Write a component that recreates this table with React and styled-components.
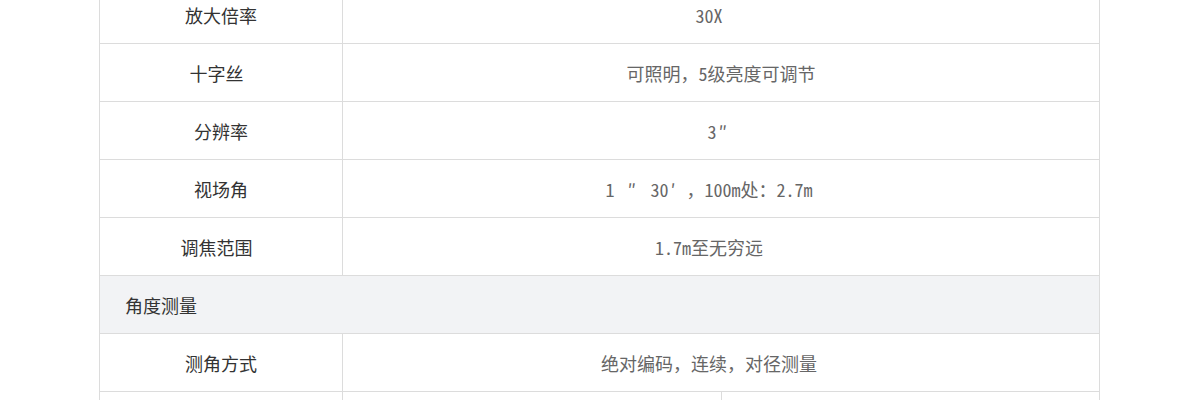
import React from 'react'
import styled, { createGlobalStyle } from 'styled-components'

const GlobalStyle = createGlobalStyle`
  html, body {
    margin: 0;
    padding: 0;
    background: #fff;
  }
  body {
    font-family: "Noto Sans Mono CJK SC", "Noto Sans CJK SC", sans-serif;
  }
`

const SpecTable = styled.div`
  width: 1001px;
  margin: -15px 0 0 99px;
  box-sizing: border-box;
  border: 1px solid #dcdcdc;
  border-bottom: none;
`

const Row = styled.div`
  display: flex;
  height: 58px;
  box-sizing: border-box;
  border-bottom: 1px solid #dcdcdc;
`

const Label = styled.div`
  width: 243px;
  flex-shrink: 0;
  box-sizing: border-box;
  border-right: 1px solid #dcdcdc;
  display: flex;
  align-items: center;
  justify-content: center;
  font-size: 18px;
  color: #333;
  white-space: pre;
`

const Value = styled.div`
  flex: 1;
  display: flex;
  align-items: center;
  justify-content: center;
  padding-right: ${p => (p.$centered ? '0' : '24px')};
  font-size: 18px;
  color: #666;
  white-space: pre;
  border-left: ${p => (p.$split ? '1px solid #dcdcdc' : 'none')};
`

// full-width prime marks, like the CJK font draws them
const Prime = styled.span`
  display: inline-block;
  box-sizing: border-box;
  width: 1em;
  padding-left: ${p => p.$indent || 2}px;
  text-align: left;
  font-feature-settings: "fwid";
`

const SectionRow = styled.div`
  height: 58px;
  box-sizing: border-box;
  border-bottom: 1px solid #dcdcdc;
  background: #f2f3f5;
  display: flex;
  align-items: center;
  padding-left: 25px;
  font-size: 18px;
  color: #333;
`

const rows = [
  { label: '放大倍率', value: '30X' },
  { label: '十字丝 ', value: '可照明，5级亮度可调节', centered: true },
  { label: '分辨率', value: ['3', <Prime key="p">″</Prime>], centered: true },
  {
    label: '视场角',
    value: ['1 ', <Prime key="a" $indent={4}>″</Prime>, ' 30', <Prime key="b">′</Prime>, '，100m处：2.7m'],
  },
  { label: '调焦范围 ', value: '1.7m至无穷远' },
  { section: '角度测量' },
  { label: '测角方式', value: '绝对编码，连续，对径测量' },
  { label: '', values: ['', ''] },
]

export default function App() {
  return (
    <>
      <GlobalStyle />
      <SpecTable>
        {rows.map((r, i) =>
          r.section ? (
            <SectionRow key={i}>{r.section}</SectionRow>
          ) : (
            <Row key={i}>
              <Label>{r.label}</Label>
              {r.values ? (
                r.values.map((v, j) => (
                  <Value key={j} $split={j > 0} $centered>
                    {v}
                  </Value>
                ))
              ) : (
                <Value $centered={r.centered}>
                  <span>{r.value}</span>
                </Value>
              )}
            </Row>
          )
        )}
      </SpecTable>
    </>
  )
}
